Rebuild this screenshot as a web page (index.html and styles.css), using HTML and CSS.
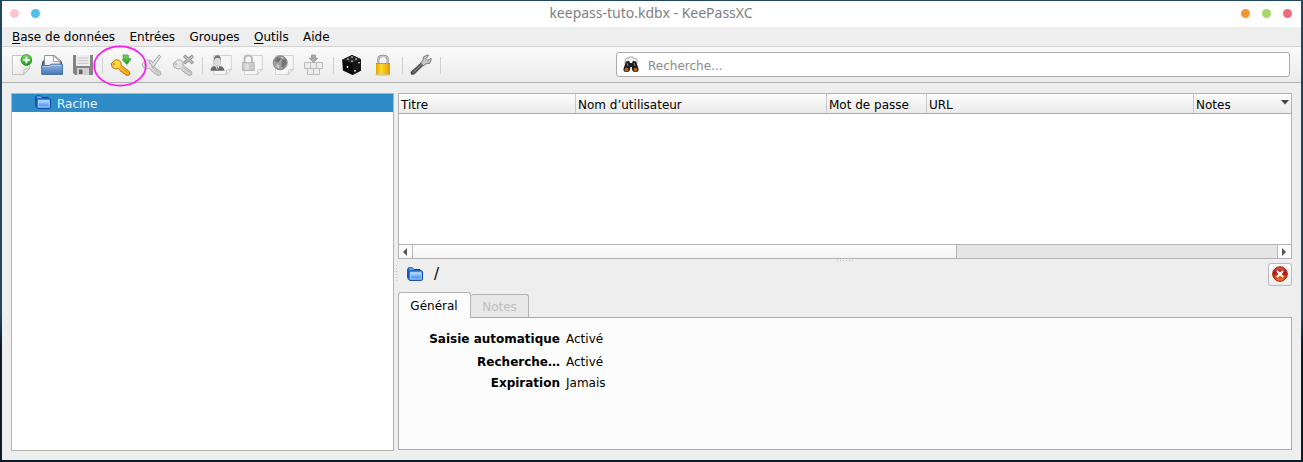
FILE: index.html
```html
<!DOCTYPE html>
<html lang="fr">
<head>
<meta charset="utf-8">
<title>keepass-tuto.kdbx - KeePassXC</title>
<link rel="stylesheet" href="styles.css">
</head>
<body>
<svg class="defs" width="0" height="0">
  <defs>
    <linearGradient id="paper" x2="1" y2="1"><stop stop-color="#fff"/><stop offset="1" stop-color="#e2e2e2"/></linearGradient>
    <linearGradient id="green" x2="0" y2="1"><stop stop-color="#7ddc62"/><stop offset="1" stop-color="#119b0c"/></linearGradient>
    <linearGradient id="tray" x2="0" y2="1"><stop stop-color="#91b5e0"/><stop offset="1" stop-color="#4577b6"/></linearGradient>
    <linearGradient id="gold" x2="1" y2="1"><stop stop-color="#fff04e"/><stop offset="1" stop-color="#f8ac0c"/></linearGradient>
    <linearGradient id="goldbody"><stop stop-color="#e2a400"/><stop offset=".35" stop-color="#ffd92e"/><stop offset="1" stop-color="#dc9b00"/></linearGradient>
    <linearGradient id="steel" x2="1" y2="1"><stop stop-color="#f0f0f0"/><stop offset="1" stop-color="#c9c9c9"/></linearGradient>
    <linearGradient id="blue" x2="0" y2="1"><stop stop-color="#b3daff"/><stop offset="1" stop-color="#3b8df0"/></linearGradient>
    <linearGradient id="red" x2="0" y2="1"><stop stop-color="#e0665e"/><stop offset=".4" stop-color="#b80f05"/><stop offset="1" stop-color="#f58b22"/></linearGradient>
    <symbol id="folder" viewBox="0 0 16 14">
      <path d="M.7 11V2.2L1.5.8h4l1.5 1.7h6V5" fill="#6fb0f5" stroke="#0645a8"/>
      <path d="M1.2 12.5V3l1-1" fill="none" stroke="#0645a8"/>
      <path d="M2 12.8V4.4l.7-.6h11.8l1 .8v8l-.8.8H2.6z" fill="#5aa2f7" stroke="#0645a8"/>
      <path d="M3.3 5.7h11v6.2h-11z" fill="url(#blue)" stroke="#c3e1ff" stroke-width=".7"/>
    </symbol>
    <symbol id="key" viewBox="0 0 22 22">
      <path d="M1.1 9.6 5.3 6h3.4l2.2 2.4.1 2.7 8.4 6.6.6 2.4-1.5 1.2-2.8-.2-1.2-1.6-1.4-.2-.7-1.5-1.6-.3-.9-1.8-1.3-1.1-3 .3-3.3-1.6z"/>
      <path d="m10 12.7 7.6 5.7" fill="none" stroke-width=".7"/>
      <circle cx="4" cy="10.1" r="1" fill="#f7f7f7" stroke-width=".8"/>
    </symbol>
    <symbol id="sheet" viewBox="0 0 22 22">
      <path d="M3.5 1.5h17.8v13.8l-5.2 5.2H3.5z" fill="#f6f6f6" stroke="#d2d2d2"/>
      <path d="m16 20.5.8-4.5 4.5-.6z" fill="#fff" stroke="#bdbdbd" stroke-width=".8"/>
    </symbol>
  </defs>
</svg>
<div class="window">
  <header class="titlebar">
    <div class="dots"><i class="dot pink"></i><i class="dot cyan"></i></div>
    <div class="title">keepass-tuto.kdbx - KeePassXC</div>
    <div class="dots"><i class="dot orange"></i><i class="dot lime"></i><i class="dot rose"></i></div>
  </header>
  <nav class="menubar">
    <span><u>B</u>ase de données</span><span>Entrées</span><span>Groupes</span><span><u>O</u>utils</span><span>Aide</span>
  </nav>
  <div class="toolbar">
    <div class="tools">
      <svg class="tool" viewBox="0 0 22 22"><path d="M2.5 1.5h17v13l-5.8 6H2.5z" fill="url(#paper)" stroke="#c3c3c3"/><path d="m13.7 20.5.5-5 5.3-1z" fill="#fff" stroke="#aaa" stroke-width=".8"/><circle cx="16.4" cy="6" r="5.4" fill="url(#green)" stroke="#108b10" stroke-width=".7"/><path d="M16.4 2.8v6.4M13.2 6h6.4" stroke="#fff" stroke-width="2"/></svg>
      <svg class="tool" viewBox="0 0 22 22"><path d="M1.5 16V8l2-2h15l2 2v8z" fill="#4670a8" stroke="#31588d"/><path d="M3.5 13V1.5h10l5.8 5V13z" fill="url(#paper)" stroke="#777" stroke-width=".8"/><path d="m12.3 1.8.2 5.5 6.8.4z" fill="#fff" stroke="#777" stroke-width=".7"/><path d="M.5 11.5h8l1.5-1.3h11.5v10.3H.8z" fill="url(#tray)" stroke="#4772ad"/><path d="M1.5 12.6h7.7l1.5-1.2h9.8" fill="none" stroke="#bdd4f0" stroke-width=".8"/></svg>
      <svg class="tool" viewBox="0 0 22 22"><path d="M1 1h20v20H3l-2-2z" fill="#848484"/><path d="M4 1h14v11H4z" fill="#eee"/><path d="M5.5 4h11M5.5 6.7h11M5.5 9.4h11" stroke="#c7c7c7"/><path d="M5 14h12v7H5z" fill="#d1d1d1"/><path d="M7 15.5h3.5V20H7z" fill="#666"/></svg>
      <i class="sep"></i>
      <svg class="tool" viewBox="0 0 22 22"><use href="#key" fill="url(#gold)" stroke="#b8680c"/><path d="M12.9 1h5.4v3.7h2.8l-4 5.7-4.9-4.6 1.3-.7z" fill="url(#green)" stroke="#3f9455" stroke-width=".8"/></svg>
      <svg class="tool" viewBox="0 0 22 22"><use href="#key" fill="url(#steel)" stroke="#acacac"/><path d="m8 7.8 2-1.5 1.6 2.8 6.2-8 2 1.4-7.6 11z" fill="#e4e4e4" stroke="#a6a6a6"/></svg>
      <svg class="tool" viewBox="0 0 22 22"><use href="#key" fill="url(#steel)" stroke="#a5a5a5"/><path d="m12 1.7 9 7.6m0-7.6-9 7.6" stroke="#8b8b8b" stroke-width="3.2"/><path d="m12.5 2.1 8 6.8m0-6.8-8 6.8" stroke="#c2c2c2" stroke-width="1.5"/></svg>
      <i class="sep"></i>
      <svg class="tool" viewBox="0 0 22 22"><use href="#sheet"/><path d="M.5 16.8q0-4 4.2-4.8h5q4.5.8 4.8 4.8H.5z" fill="#686868"/><path d="m5 11.5 2.3 5.3 2.3-5.3z" fill="#fff"/><path d="M7.2 12.5v4" stroke="#555"/><ellipse cx="7.4" cy="7" rx="3.2" ry="4.7" fill="#ddd" stroke="#aaa" stroke-width=".6"/><path d="M4 6q-.3-4.7 3.4-4.8Q11.2 1.4 10.7 6L9.5 4H6z" fill="#777"/></svg>
      <svg class="tool" viewBox="0 0 22 22"><use href="#sheet"/><path d="M3.5 10V5q0-3.6 3.8-3.6T11 5v5" fill="none" stroke="#b9b9b9" stroke-width="2"/><path d="M1.5 8.5h11.7v8H1.5z" fill="#cbcbcb" stroke="#b7b7b7"/><path d="M4 9.5h4v6H4z" fill="#dfdfdf"/></svg>
      <svg class="tool" viewBox="0 0 22 22"><use href="#sheet"/><circle cx="8.2" cy="8.8" r="7" fill="#a2a2a2" stroke="#808080"/><path d="m2.5 6.5 3-3.2 3.5.6-1 2.8-2.8 2zM10 5.5l3.5-.8 1 4.5-3.2 4.5-2-1.5.3-3z" fill="#737373"/><path d="m4.5 10 3 1.4-.7 3-2.2-1.5zM9 2.8l2.5.7-1.2 1.3z" fill="#ccc"/></svg>
      <svg class="tool" viewBox="0 0 22 22"><g fill="#ededed" stroke="#bcbcbc"><path d="M1.5 8.5h6v6h-6zM7.5 8.5h6v6h-6zM13.5 8.5h6v6h-6zM4.5 14.5h6v6h-6zM10.5 14.5h6v6h-6z"/></g><path d="M8.5 1h4v3.2H15l-4.5 4-4.5-4h2.5z" fill="#ababab" stroke="#8e8e8e" stroke-width=".7"/></svg>
      <i class="sep"></i>
      <svg class="tool" viewBox="0 0 22 22"><path d="M1.2 5.8 11 1l9 4.2v11.4L11.5 21l-9.6-4.5z" fill="#080808"/><path d="M1.2 5.8 11 1l9 4.2-8.7 4z" fill="#292929"/><path d="M11.5 9.2V21l8.5-4.4V5.2z" fill="#151515"/><g fill="#fff"><ellipse cx="7" cy="5" rx="1.1" ry=".5"/><ellipse cx="11" cy="3.1" rx="1.1" ry=".5"/><ellipse cx="15" cy="5.1" rx="1.1" ry=".5"/><ellipse cx="11" cy="6.9" rx="1.1" ry=".5"/><circle cx="6.5" cy="13" r=".9"/><circle cx="18" cy="8.8" r=".8"/><circle cx="14" cy="16.8" r=".9"/></g></svg>
      <svg class="tool" viewBox="0 0 22 22"><ellipse cx="11" cy="20.7" rx="8" ry="1" fill="#ccc"/><path d="M6.2 10V5.8Q6.2 1.8 11 1.8t4.8 4V10" fill="none" stroke="#888" stroke-width="2.2"/><path d="M6 10V5.8q0-3.7 5-3.7t5 3.7V10" fill="none" stroke="#ddd" stroke-width="1"/><path d="M4 9h14v11.5H4z" fill="url(#goldbody)"/><path d="M4 9.5h14" stroke="#d69a00"/></svg>
      <i class="sep"></i>
      <svg class="tool" viewBox="0 0 22 22"><path d="m1.5 20.5-.5-2.5L11.3 8.8l2.2 2.1L4.3 20z" fill="#555" stroke="#2e2e2e" stroke-width=".7"/><path d="m10.5 8.7 2.6-2.5.3-3.2 3.8-2 1.5.5-2.7 3 1.8 1.9 3-2.2.5 1.3-1.7 3.8-3.5.5-2.8 2.1z" fill="#c6c6c6" stroke="#606060" stroke-width=".8"/><path d="M3.2 18.4 12 10.3" stroke="#999"/></svg>
      <i class="sep"></i>
      <svg class="highlight" viewBox="0 0 54 44"><ellipse cx="27" cy="22" rx="25.8" ry="19.6"/></svg>
    </div>
    <div class="search">
      <svg viewBox="0 0 16 16"><path d="M2 7V2.5L4 1.2h2V0h4v1.2h2l2 1.3V7" fill="#f4f4f4" stroke="#aaa"/><path d="m1 10 2-5.5 3-.8L7 6h2l1-2.3 3 .8L15 10l.7 3-1.5 2h-3.4L9 13l-.3-3H7.3L7 13l-1.8 2H1.8L.3 13z" fill="#1e1e1e"/><path d="m4 6 1 3m6-3 1 3" stroke="#888"/><circle cx="3.5" cy="12.7" r="2" fill="#b95d20"/><circle cx="12.5" cy="12.7" r="2" fill="#b95d20"/></svg>
      <span>Recherche...</span>
    </div>
  </div>
  <main class="content">
    <section class="tree"><div class="root"><svg class="folder-icon"><use href="#folder"/></svg><span>Racine</span></div></section>
    <div class="splitter"><i></i></div>
    <section class="right">
      <div class="table">
        <div class="thead"><span>Titre</span><span>Nom d’utilisateur</span><span>Mot de passe</span><span>URL</span><span>Notes<svg viewBox="0 0 8 5"><path d="M0 0h8L4 4.6z"/></svg></span></div>
        <div class="rows"></div>
        <div class="scrollbar"><b><svg viewBox="0 0 4 8"><path d="M4 0v8L0 4z"/></svg></b><i></i><b><svg viewBox="0 0 4 8"><path d="M0 0v8l4-4z"/></svg></b></div>
      </div>
      <div class="grip"><i></i></div>
      <div class="group-head"><svg class="folder-icon"><use href="#folder"/></svg><span>/</span>
        <div class="close"><svg viewBox="0 0 16 16"><circle cx="8" cy="8" r="7.3" fill="url(#red)" stroke="#a60e08"/><path d="m5 5 6 6m0-6-6 6" stroke="#fff" stroke-width="2.3"/></svg></div>
      </div>
      <div class="tabs"><div class="tab active">Général</div><div class="tab off">Notes</div></div>
      <div class="panel">
        <b>Saisie automatique</b><span>Activé</span>
        <b>Recherche…</b><span>Activé</span>
        <b>Expiration</b><span>Jamais</span>
      </div>
    </section>
  </main>
</div>
</body>
</html>
```
FILE: styles.css
```css
* { box-sizing: border-box; }
html { height: 100%; background: linear-gradient(#21465f 0, #21465f 315px, #0c1b2a 345px, #0c1b2a); }
body { margin: 0; height: 462px; padding: 1px 2px 2px; overflow: hidden; font: 12px/16px "DejaVu Sans", sans-serif; color: #000; }
.defs { position: absolute; }
.window { height: 459px; display: flex; flex-direction: column; background: #eee; }

.titlebar { height: 26px; flex: none; background: #fff; display: grid; grid-template-columns: 100px 1fr 100px; align-items: center; padding: 0 9px 1px 8px; }
.title { text-align: center; font: 14px/20px "Noto Sans", sans-serif; color: #808080; padding-bottom: 1px; }
.dots { display: flex; gap: 12px; }
.dots:last-child { justify-content: flex-end; }
.dot { width: 9px; height: 9px; border-radius: 50%; }
.pink { background: #ffc5cd; }
.cyan { background: #4fc0e9; }
.orange { background: #f79334; }
.lime { background: #a4d66a; }
.rose { background: #ef6a7c; }

.menubar { height: 19px; flex: none; padding: 2px 10px 0; display: flex; gap: 14.4px; line-height: 17px; }
.menubar u { text-underline-offset: 2px; text-decoration-thickness: 1px; }

.toolbar { height: 37px; flex: none; display: flex; align-items: center; border-top: 1px solid #d2d2d2; border-bottom: 1px solid #b0b0b0; background: linear-gradient(#fafafa, #ebebeb); padding: 0 11px 0 8px; }
.tools { position: relative; display: flex; align-items: center; width: 606px; padding-top: 1px; }
.tool { width: 22px; height: 22px; margin-right: 9px; flex: none; }
.sep { width: 1px; height: 17px; margin-left: -1px; margin-right: 7px; background: #d0d0d0; flex: none; }
.highlight { position: absolute; left: 83px; top: -9px; width: 54px; height: 44px; fill: none; stroke: #ff14f5; stroke-width: 1.7; }
.search { flex: 1; height: 25px; border: 1px solid #ababab; border-radius: 3px; background: #fff; display: flex; align-items: center; padding-left: 6px; color: #8b8b8b; }
.search span { padding-top: 2px; }
.search svg { width: 16px; height: 16px; margin-right: 9px; overflow: visible; }

.content { flex: 1; display: flex; padding: 10px 9px 9px; }
.tree { width: 383px; background: #fff; border: 1px solid #b3b3b3; }
.root { height: 18px; background: #308cc6; color: #e8f4ff; display: flex; align-items: center; padding-left: 23px; gap: 6px; }
.root span { padding-top: 1px; }
.root .folder-icon { margin-bottom: 2px; }
.folder-icon { width: 16px; height: 14px; flex: none; }
.splitter { width: 4px; display: flex; justify-content: center; }
.splitter i { width: 1px; height: 17px; margin-top: 172px; background: repeating-linear-gradient(#bbb 0 1px, transparent 1px 3px); }
.right { flex: 1; min-width: 0; display: flex; flex-direction: column; padding-bottom: 1px; }
.table { height: 166px; border: 1px solid #b3b3b3; background: #fff; display: flex; flex-direction: column; }
.thead { height: 20px; display: grid; grid-template-columns: 177px 251px 100px 267px 1fr; grid-template-rows: 19px; background: linear-gradient(#fcfcfc, #ebebeb); border-bottom: 1px solid #acacac; line-height: 22px; }
.thead span { padding-left: 2px; border-right: 1px solid #c7c7c7; }
.thead span:last-child { border: 0; display: flex; justify-content: space-between; padding-right: 2px; }
.thead svg { width: 8px; height: 5px; margin-top: 6px; fill: #444; }
.rows { flex: 1; }
.scrollbar { height: 14px; display: flex; border-top: 1px solid #b3b3b3; background: #e5e5e5; }
.scrollbar b { width: 14px; background: #fafafa; display: flex; align-items: center; justify-content: center; padding-right: 1px; }
.scrollbar b:first-child { border-right: 1px solid #b8b8b8; }
.scrollbar b:last-child { margin-left: auto; border-left: 1px solid #b8b8b8; }
.scrollbar b svg { width: 4px; height: 8px; fill: #555; }
.scrollbar i { width: 544px; background: linear-gradient(#fdfdfd, #f3f3f3); border-right: 1px solid #b3b3b3; }
.grip { height: 4px; display: flex; justify-content: center; padding-top: 1px; }
.grip i { width: 16px; height: 1px; background: repeating-linear-gradient(90deg, #bbb 0 1px, transparent 1px 3px); }
.group-head { height: 23px; display: flex; align-items: center; padding-left: 9px; gap: 11px; font-size: 15px; }
.group-head span { padding-bottom: 1px; }
.group-head .folder-icon { margin-bottom: 2px; }
.close { width: 24px; height: 23px; margin-left: auto; border: 1px solid #b9b9b9; border-radius: 3px; background: linear-gradient(#fdfdfd, #eee); display: flex; align-items: center; justify-content: center; }
.close svg { width: 16px; height: 16px; margin-top: -1px; }
.tabs { height: 31px; display: flex; align-items: flex-end; }
.tab { border: 1px solid #b3b3b3; border-bottom: 0; border-radius: 3px 3px 0 0; text-align: center; }
.active { width: 73px; height: 26px; line-height: 26px; background: #fcfcfc; margin-bottom: -1px; z-index: 1; padding-right: 1px; }
.off { width: 58px; height: 23px; line-height: 25px; background: #e8e8e8; color: #bebebe; border-left: 0; }
.panel { flex: 1; border: 1px solid #ababab; background: #fcfcfc; display: grid; grid-template-columns: 161px 1fr; grid-template-rows: 23px 21px 20px; column-gap: 6px; padding-top: 13px; align-content: start; }
.panel b { text-align: right; }
```
